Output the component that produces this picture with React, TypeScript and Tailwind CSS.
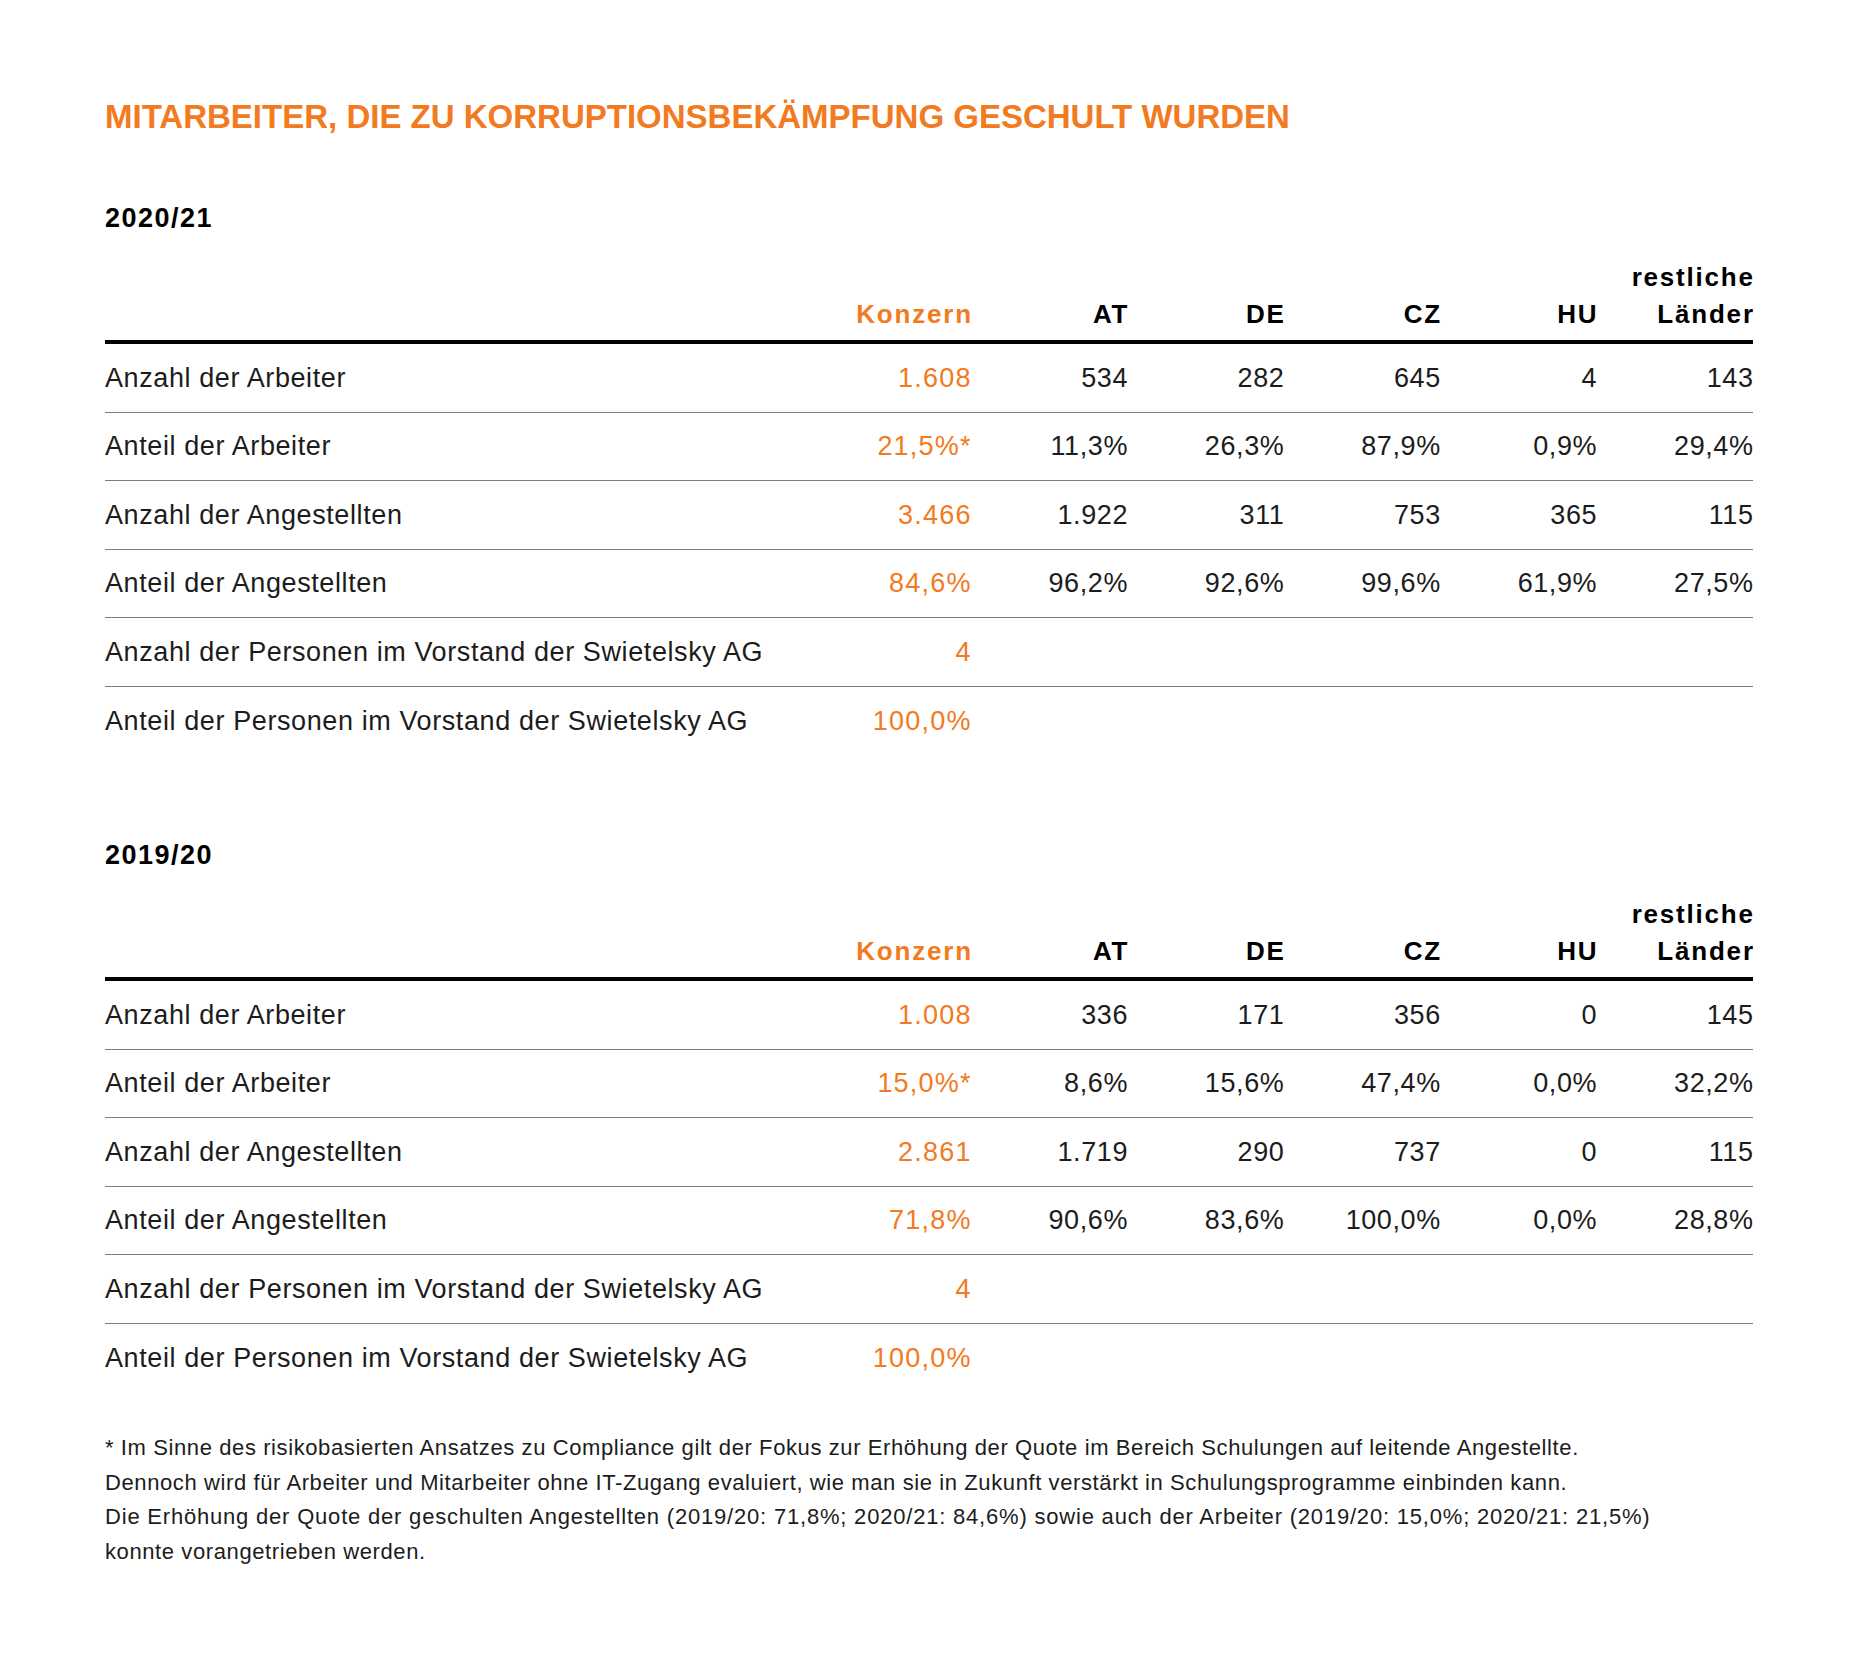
import React from 'react';

type Row = { label: string; konzern: string; values: string[] };

const cols = ['AT', 'DE', 'CZ', 'HU'];

const data2021: Row[] = [
  { label: 'Anzahl der Arbeiter', konzern: '1.608', values: ['534', '282', '645', '4', '143'] },
  { label: 'Anteil der Arbeiter', konzern: '21,5%*', values: ['11,3%', '26,3%', '87,9%', '0,9%', '29,4%'] },
  { label: 'Anzahl der Angestellten', konzern: '3.466', values: ['1.922', '311', '753', '365', '115'] },
  { label: 'Anteil der Angestellten', konzern: '84,6%', values: ['96,2%', '92,6%', '99,6%', '61,9%', '27,5%'] },
  { label: 'Anzahl der Personen im Vorstand der Swietelsky AG', konzern: '4', values: [] },
  { label: 'Anteil der Personen im Vorstand der Swietelsky AG', konzern: '100,0%', values: [] },
];

const data1920: Row[] = [
  { label: 'Anzahl der Arbeiter', konzern: '1.008', values: ['336', '171', '356', '0', '145'] },
  { label: 'Anteil der Arbeiter', konzern: '15,0%*', values: ['8,6%', '15,6%', '47,4%', '0,0%', '32,2%'] },
  { label: 'Anzahl der Angestellten', konzern: '2.861', values: ['1.719', '290', '737', '0', '115'] },
  { label: 'Anteil der Angestellten', konzern: '71,8%', values: ['90,6%', '83,6%', '100,0%', '0,0%', '28,8%'] },
  { label: 'Anzahl der Personen im Vorstand der Swietelsky AG', konzern: '4', values: [] },
  { label: 'Anteil der Personen im Vorstand der Swietelsky AG', konzern: '100,0%', values: [] },
];

const YearTable: React.FC<{ year: string; rows: Row[] }> = ({ year, rows }) => (
  <section>
    <h2 className="text-[27px] leading-none font-bold tracking-[1.5px] text-black">{year}</h2>

    {/* header */}
    <div className="grid grid-cols-[1fr_repeat(6,156.4px)] items-end mt-[27px] pb-[7px] text-[26px] leading-[37px] font-bold tracking-[1.8px] text-right border-b-[4px] border-black">
      <div />
      <div className="text-[#f27a21] mr-[-1.8px]">Konzern</div>
      {cols.map((c) => (
        <div key={c} className="mr-[-1.8px]">{c}</div>
      ))}
      <div className="mr-[-1.8px]">
        restliche
        <br />
        Länder
      </div>
    </div>

    {rows.map((r, i) => (
      <div
        key={r.label}
        className={
          'grid grid-cols-[1fr_repeat(6,156.4px)] items-center h-[68.5px] text-[27px] tracking-[0.6px] text-right text-[#1c1c1c] ' +
          (i < rows.length - 1 ? 'border-b-[1.5px] border-[#7d7d7d]' : '')
        }
      >
        <div className="text-left">{r.label}</div>
        <div className="text-[#f27a21] mr-[-0.6px] tracking-[1.2px]">{r.konzern}</div>
        {[0, 1, 2, 3, 4].map((k) => (
          <div key={k} className="mr-[-0.6px]">{r.values[k] ?? ''}</div>
        ))}
      </div>
    ))}
  </section>
);

const App: React.FC = () => {
  return (
    <div className="w-[1867px] min-h-[1666px] bg-white font-['Liberation_Sans',Arial,sans-serif] text-black">
      <div className="w-[1648px] ml-[105px] pt-[100px]">
        <h1 className="text-[33px] leading-none font-bold text-[#f27a21] mb-[72px]">
          MITARBEITER, DIE ZU KORRUPTIONSBEKÄMPFUNG GESCHULT WURDEN
        </h1>

        <YearTable year="2020/21" rows={data2021} />

        <div className="h-[87px]" />

        <YearTable year="2019/20" rows={data1920} />

        <p className="mt-[39px] text-[22px] leading-[34.6px] tracking-[0.6px] text-[#1c1c1c]">
          * Im Sinne des risikobasierten Ansatzes zu Compliance gilt der Fokus zur Erhöhung der Quote im Bereich Schulungen auf leitende Angestellte.
          <br />
          Dennoch wird für Arbeiter und Mitarbeiter ohne IT-Zugang evaluiert, wie man sie in Zukunft verstärkt in Schulungsprogramme einbinden kann.
          <br />
          <span className="tracking-[0.8px]">
            Die Erhöhung der Quote der geschulten Angestellten (2019/20: 71,8%; 2020/21: 84,6%) sowie auch der Arbeiter (2019/20: 15,0%; 2020/21: 21,5%)
          </span>
          <br />
          konnte vorangetrieben werden.
        </p>
      </div>
    </div>
  );
};

export default App;
